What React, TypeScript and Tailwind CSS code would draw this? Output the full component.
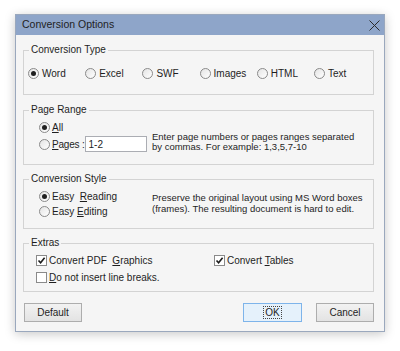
import type { ReactNode } from "react";

const font = { fontFamily: '"Liberation Sans", Arial, sans-serif' };

const Radio = ({ checked = false }: { checked?: boolean }) => (
  <span className="inline-flex h-[11px] w-[11px] shrink-0 items-center justify-center rounded-full border border-[#8a8a8a] bg-gradient-to-br from-[#e4e4e4] to-white">
    {checked && <span className="h-[5px] w-[5px] rounded-full bg-[#202020]" />}
  </span>
);

const Check = ({ checked = false }: { checked?: boolean }) => (
  <span className="inline-flex h-[11px] w-[11px] shrink-0 items-center justify-center border border-[#8a8a8a] bg-white">
    {checked && (
      <svg width="9" height="9" viewBox="0 0 9 9">
        <path d="M1.5 4.5 L3.6 6.8 L7.6 1.8" fill="none" stroke="#1c1c1c" strokeWidth="1.6" />
      </svg>
    )}
  </span>
);

// padding goes on the inner div, fieldset padding would push the legend too
const Group = ({ title, className, inner, children }: { title: string; className?: string; inner: string; children: ReactNode }) => (
  <fieldset className={`border border-[#d3d3d3] ${className ?? ""}`}>
    <legend className="ml-[5px] px-[2px] text-[10px] leading-[12px]">{title}</legend>
    <div className={inner}>{children}</div>
  </fieldset>
);

const U = ({ children }: { children: ReactNode }) => <span className="underline underline-offset-[1px]">{children}</span>;

const Button = ({ children, primary = false }: { children: ReactNode; primary?: boolean }) => (
  <button
    className={`flex h-[19px] items-center justify-center border text-[10px] ${
      primary ? "w-[59px] border-[#7eb4ea] bg-[#e5f1fb]" : "w-[58px] border-[#adadad] bg-gradient-to-b from-[#f2f2f2] to-[#e3e3e3]"
    }`}
  >
    {children}
  </button>
);

export default function App() {
  const types = ["Word", "Excel", "SWF", "Images", "HTML", "Text"];

  return (
    <div className="h-[351px] w-[400px] bg-white pl-[15px] pt-[14px] text-[#1e1e1e]" style={font}>
      <div className="w-[370px] border border-[#9aa8bd] bg-[#f5f5f5] shadow-[0_2px_10px_rgba(0,0,0,0.22)]">
        <div className="flex h-[20px] items-center justify-between bg-[#8ea5c9] pl-[6px] pr-[4px]">
          <span className="text-[10.5px]">Conversion Options</span>
          <svg width="11" height="11" viewBox="0 0 11 11">
            <path d="M0.5 0.5 L10.5 10.5 M10.5 0.5 L0.5 10.5" stroke="#2a2a2a" strokeWidth="1" />
          </svg>
        </div>

        <div className="pb-[9px] pl-[7px] pr-[10px] pt-[9px]">
          <Group title="Conversion Type" inner="pb-[15px] pl-[4px] pt-[11px]">
            <div className="flex">
              {types.map((t, i) => (
                <div key={t} className="flex h-[12px] w-[57.2px] items-center gap-[3px] text-[10px]">
                  <Radio checked={i === 0} />
                  <span>{t}</span>
                </div>
              ))}
            </div>
          </Group>

          <Group title="Page Range" className="mt-[9px]" inner="flex items-end gap-[6px] pb-[12px] pl-[15px] pt-[5px]">
            <div className="flex w-[107px] shrink-0 flex-col gap-[3px] text-[10px]">
              <div className="flex h-[12px] items-center gap-[2px]">
                <Radio checked />
                <span>
                  <U>A</U>ll
                </span>
              </div>
              <div className="flex h-[16px] items-center whitespace-nowrap">
                <Radio />
                <span className="ml-[2px] tracking-[-0.2px]">
                  <U>P</U>ages :
                </span>
                <div className="ml-auto flex h-[16px] w-[62px] shrink-0 items-center border border-[#abadb3] bg-white pl-[3px]">
                  1-2
                </div>
              </div>
            </div>
            <p className="text-[9.5px] leading-[10px]">
              Enter page numbers or pages ranges separated
              <br />
              by commas. For example: 1,3,5,7-10
            </p>
          </Group>

          <Group title="Conversion Style" className="mt-[8px]" inner="flex items-start gap-[6px] pb-[11px] pl-[15px] pt-[5px]">
            <div className="flex w-[107px] shrink-0 flex-col gap-[3px] text-[10px]">
              <div className="flex h-[12px] items-center gap-[2px]">
                <Radio checked />
                <span>
                  Easy&nbsp;&nbsp;<U>R</U>eading
                </span>
              </div>
              <div className="flex h-[12px] items-center gap-[2px]">
                <Radio />
                <span>
                  Easy <U>E</U>diting
                </span>
              </div>
            </div>
            <p className="mt-[3px] text-[9.5px] leading-[10.5px]">
              Preserve the original layout using MS Word boxes
              <br />
              (frames). The resulting document is hard to edit.
            </p>
          </Group>

          <Group title="Extras" className="mt-[8px]" inner="flex flex-col gap-[5px] pb-[8px] pl-[12px] pt-[5px] text-[10px]">
            <div className="flex h-[12px] items-center">
              <div className="flex w-[178px] items-center gap-[2px]">
                <Check checked />
                <span>
                  Convert PDF&nbsp;&nbsp;<U>G</U>raphics
                </span>
              </div>
              <div className="flex items-center gap-[2px]">
                <Check checked />
                <span>
                  Convert <U>T</U>ables
                </span>
              </div>
            </div>
            <div className="flex h-[12px] items-center gap-[2px]">
              <Check />
              <span>
                <U>D</U>o not insert line breaks.
              </span>
            </div>
          </Group>

          <div className="mt-[11px] flex items-center pl-[1px]">
            <Button>Default</Button>
            <div className="ml-auto flex gap-[14px]">
              <Button primary>
                <span className="border border-dotted border-[#444] px-[1px] leading-[11px]">OK</span>
              </Button>
              <Button>Cancel</Button>
            </div>
          </div>
        </div>
      </div>
    </div>
  );
}
